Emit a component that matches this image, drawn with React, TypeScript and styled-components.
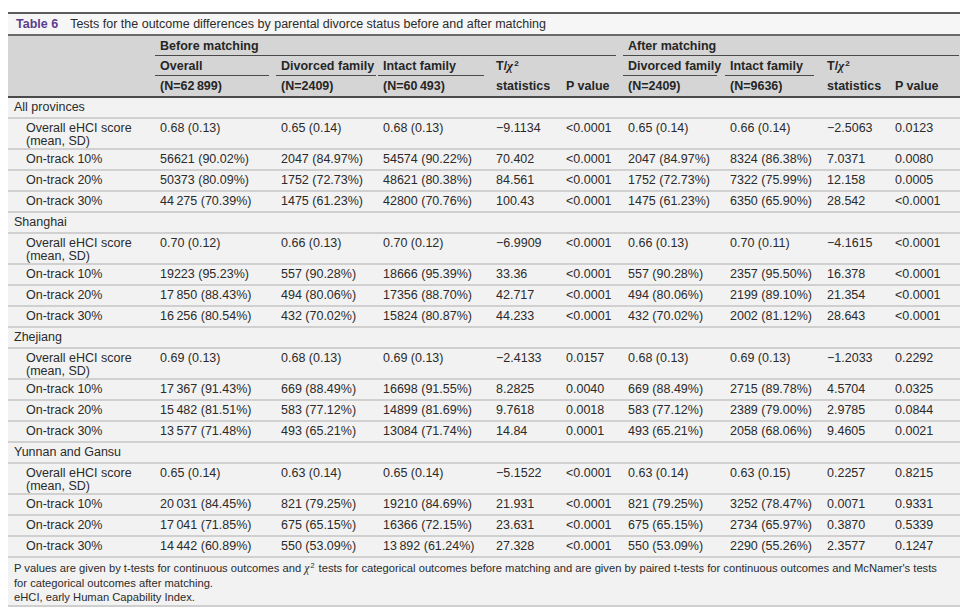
import React from 'react';
import styled, { createGlobalStyle } from 'styled-components';

type DataRow = { label: string; cells: string[]; tall?: boolean };
type Section = { name: string; rows: DataRow[] };

const T = '\u2009';

const sections: Section[] = [
	{
		name: 'All provinces',
		rows: [
			{ label: 'Overall eHCI score (mean, SD)', tall: true, cells: ['0.68 (0.13)', '0.65 (0.14)', '0.68 (0.13)', '−9.1134', '<0.0001', '0.65 (0.14)', '0.66 (0.14)', '−2.5063', '0.0123'] },
			{ label: 'On-track 10%', cells: ['56621 (90.02%)', '2047 (84.97%)', '54574 (90.22%)', '70.402', '<0.0001', '2047 (84.97%)', '8324 (86.38%)', '7.0371', '0.0080'] },
			{ label: 'On-track 20%', cells: ['50373 (80.09%)', '1752 (72.73%)', '48621 (80.38%)', '84.561', '<0.0001', '1752 (72.73%)', '7322 (75.99%)', '12.158', '0.0005'] },
			{ label: 'On-track 30%', cells: [`44${T}275 (70.39%)`, '1475 (61.23%)', '42800 (70.76%)', '100.43', '<0.0001', '1475 (61.23%)', '6350 (65.90%)', '28.542', '<0.0001'] },
		],
	},
	{
		name: 'Shanghai',
		rows: [
			{ label: 'Overall eHCI score (mean, SD)', tall: true, cells: ['0.70 (0.12)', '0.66 (0.13)', '0.70 (0.12)', '−6.9909', '<0.0001', '0.66 (0.13)', '0.70 (0.11)', '−4.1615', '<0.0001'] },
			{ label: 'On-track 10%', cells: ['19223 (95.23%)', '557 (90.28%)', '18666 (95.39%)', '33.36', '<0.0001', '557 (90.28%)', '2357 (95.50%)', '16.378', '<0.0001'] },
			{ label: 'On-track 20%', cells: [`17${T}850 (88.43%)`, '494 (80.06%)', '17356 (88.70%)', '42.717', '<0.0001', '494 (80.06%)', '2199 (89.10%)', '21.354', '<0.0001'] },
			{ label: 'On-track 30%', cells: [`16${T}256 (80.54%)`, '432 (70.02%)', '15824 (80.87%)', '44.233', '<0.0001', '432 (70.02%)', '2002 (81.12%)', '28.643', '<0.0001'] },
		],
	},
	{
		name: 'Zhejiang',
		rows: [
			{ label: 'Overall eHCI score (mean, SD)', tall: true, cells: ['0.69 (0.13)', '0.68 (0.13)', '0.69 (0.13)', '−2.4133', '0.0157', '0.68 (0.13)', '0.69 (0.13)', '−1.2033', '0.2292'] },
			{ label: 'On-track 10%', cells: [`17${T}367 (91.43%)`, '669 (88.49%)', '16698 (91.55%)', '8.2825', '0.0040', '669 (88.49%)', '2715 (89.78%)', '4.5704', '0.0325'] },
			{ label: 'On-track 20%', cells: [`15${T}482 (81.51%)`, '583 (77.12%)', '14899 (81.69%)', '9.7618', '0.0018', '583 (77.12%)', '2389 (79.00%)', '2.9785', '0.0844'] },
			{ label: 'On-track 30%', cells: [`13${T}577 (71.48%)`, '493 (65.21%)', '13084 (71.74%)', '14.84', '0.0001', '493 (65.21%)', '2058 (68.06%)', '9.4605', '0.0021'] },
		],
	},
	{
		name: 'Yunnan and Gansu',
		rows: [
			{ label: 'Overall eHCI score (mean, SD)', tall: true, cells: ['0.65 (0.14)', '0.63 (0.14)', '0.65 (0.14)', '−5.1522', '<0.0001', '0.63 (0.14)', '0.63 (0.15)', '0.2257', '0.8215'] },
			{ label: 'On-track 10%', cells: [`20${T}031 (84.45%)`, '821 (79.25%)', '19210 (84.69%)', '21.931', '<0.0001', '821 (79.25%)', '3252 (78.47%)', '0.0071', '0.9331'] },
			{ label: 'On-track 20%', cells: [`17${T}041 (71.85%)`, '675 (65.15%)', '16366 (72.15%)', '23.631', '<0.0001', '675 (65.15%)', '2734 (65.97%)', '0.3870', '0.5339'] },
			{ label: 'On-track 30%', cells: [`14${T}442 (60.89%)`, '550 (53.09%)', `13${T}892 (61.24%)`, '27.328', '<0.0001', '550 (53.09%)', '2290 (55.26%)', '2.3577', '0.1247'] },
		],
	},
];

const colWidths = [147, 121, 102, 113, 70, 62, 102, 97, 68, 70];

const Stat = () => (
	<>
		T/<Chi>χ</Chi><Sup>2</Sup>
		<br />
		statistics
	</>
);

const App: React.FC = () => {
	return (
		<Page>
			<GlobalStyle />
			<Frame>
				<Title>
					<TitleLabel>Table 6</TitleLabel>
					Tests for the outcome differences by parental divorce status before and after matching
				</Title>
				<Table>
					<colgroup>
						{colWidths.map((w, i) => (
							<col key={i} style={{ width: w }} />
						))}
					</colgroup>
					<Head>
						<tr>
							<HeadCell rowSpan={3} />
							<HeadCell colSpan={5}>
								<Rule $gap={7}>Before matching</Rule>
							</HeadCell>
							<HeadCell colSpan={4}>
								<Rule $gap={1}>After matching</Rule>
							</HeadCell>
						</tr>
						<tr>
							<HeadCell><Rule $gap={7}>Overall</Rule></HeadCell>
							<HeadCell><Rule $gap={2}>Divorced family</Rule></HeadCell>
							<HeadCell><Rule $gap={7}>Intact family</Rule></HeadCell>
							<StackCell rowSpan={2}><Stat /></StackCell>
							<StackCell rowSpan={2}>P value</StackCell>
							<HeadCell><Rule $gap={8}>Divorced family</Rule></HeadCell>
							<HeadCell><Rule $gap={8}>Intact family</Rule></HeadCell>
							<StackCell rowSpan={2}><Stat /></StackCell>
							<StackCell rowSpan={2}>P value</StackCell>
						</tr>
						<tr>
							<NCell>(N=62{T}899)</NCell>
							<NCell>(N=2409)</NCell>
							<NCell>(N=60{T}493)</NCell>
							<NCell>(N=2409)</NCell>
							<NCell>(N=9636)</NCell>
						</tr>
					</Head>
					<tbody>
						{sections.map((s, si) => (
							<React.Fragment key={s.name}>
								<tr>
									<SectionCell colSpan={10} $first={si === 0}>{s.name}</SectionCell>
								</tr>
								{s.rows.map((r) => (
									<tr key={r.label}>
										<LabelCell $tall={r.tall}>
											{r.tall ? (
												<>
													Overall eHCI score
													<br />
													(mean, SD)
												</>
											) : (
												r.label
											)}
										</LabelCell>
										{r.cells.map((c, ci) => (
											<Cell key={ci} $tall={r.tall}>{c}</Cell>
										))}
									</tr>
								))}
							</React.Fragment>
						))}
					</tbody>
				</Table>
				<Notes>
					P values are given by t-tests for continuous outcomes and <Chi>χ</Chi><NoteSup>2</NoteSup> tests for categorical
					outcomes before matching and are given by paired t-tests for continuous outcomes and McNamer's tests
					<br />
					for categorical outcomes after matching.
					<br />
					eHCI, early Human Capability Index.
				</Notes>
			</Frame>
		</Page>
	);
};

export default App;

const GlobalStyle = createGlobalStyle`
	body {
		margin: 0;
		background: #ffffff;
		font-family: "Liberation Sans", Arial, sans-serif;
		color: #2b2b2b;
	}
`;

const Page = styled.div`
	padding: 12px 8px 0 8px;
	width: 952px;
`;

const Frame = styled.div`
	background: #f2f2f2;
	border-top: 2px solid #5c5c5c;
	border-bottom: 2px solid #cfcfcf;
`;

const Title = styled.div`
	background: #f6f6f6;
	border-bottom: 2px solid #6a6a6a;
	font-size: 12.5px;
	height: 20px;
	line-height: 20px;
	padding-left: 8px;
	color: #2b2b2b;
`;

const TitleLabel = styled.span`
	color: #5b3e8e;
	font-weight: bold;
	margin-right: 12px;
`;

const Table = styled.table`
	width: 100%;
	table-layout: fixed;
	border-collapse: separate;
	border-spacing: 0;
	font-size: 12.5px;
`;

const Head = styled.thead`
	background: #d5d5d5;
`;

const HeadCell = styled.th`
	padding: 0;
	height: 20px;
	text-align: left;
	font-weight: bold;
	color: #262626;
	vertical-align: bottom;
`;

const Rule = styled.div<{ $gap: number }>`
	height: 19px;
	line-height: 20px;
	padding-left: 5px;
	margin-right: ${(p) => p.$gap}px;
	border-bottom: 1px solid #4a4a4a;
	white-space: nowrap;
`;

const StackCell = styled(HeadCell)`
	padding-left: 5px;
	line-height: 20px;
	white-space: nowrap;
`;

const NCell = styled(HeadCell)`
	padding-left: 5px;
	line-height: 20px;
`;

const Chi = styled.i`
	font-family: "Liberation Serif", serif;
	font-size: 1.05em;
	margin-right: 1px;
`;

const Sup = styled.span`
	font-size: 0.65em;
	line-height: 0;
	vertical-align: 0.55em;
`;

const NoteSup = styled(Sup)`
	margin-right: 1px;
`;

const SectionCell = styled.td<{ $first?: boolean }>`
	border-top: ${(p) => (p.$first ? '2px solid #4a4a4a' : '2px solid #d0d0d0')};
	height: 19px;
	line-height: 19px;
	padding: 0 0 0 6px;
`;

const Cell = styled.td<{ $tall?: boolean }>`
	border-top: 2px solid #d0d0d0;
	height: ${(p) => (p.$tall ? '29px' : '19px')};
	line-height: ${(p) => (p.$tall ? '13px' : '19px')};
	padding: ${(p) => (p.$tall ? '3px 0 0 5px' : '0 0 0 5px')};
	vertical-align: ${(p) => (p.$tall ? 'top' : 'middle')};
	white-space: nowrap;
	box-sizing: border-box;
`;

const LabelCell = styled(Cell)`
	padding-left: 18px;
`;

const Notes = styled.div`
	border-top: 2px solid #d0d0d0;
	font-size: 11.2px;
	line-height: 14px;
	padding: 3px 4px 1px 6px;
	color: #2b2b2b;
	white-space: nowrap;
`;
